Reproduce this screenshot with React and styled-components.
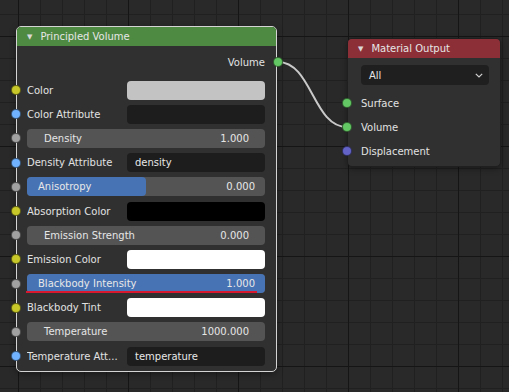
import React from 'react';
import styled, { createGlobalStyle } from 'styled-components';

const SOCKET = {
  float: '#a1a1a1',
  color: '#c7c729',
  string: '#70b2ff',
  shader: '#63c763',
  vector: '#6363c7',
};

const inputs = [
  { kind: 'color', label: 'Color', swatch: '#c3c3c3' },
  { kind: 'string', label: 'Color Attribute', text: '' },
  { kind: 'number', label: 'Density', value: '1.000' },
  { kind: 'string', label: 'Density Attribute', text: 'density' },
  { kind: 'factor', label: 'Anisotropy', value: '0.000', fill: 0.5 },
  { kind: 'color', label: 'Absorption Color', swatch: '#000000' },
  { kind: 'number', label: 'Emission Strength', value: '0.000' },
  { kind: 'color', label: 'Emission Color', swatch: '#ffffff' },
  { kind: 'factor', label: 'Blackbody Intensity', value: '1.000', fill: 1, marked: true },
  { kind: 'color', label: 'Blackbody Tint', swatch: '#ffffff' },
  { kind: 'number', label: 'Temperature', value: '1000.000' },
  { kind: 'string', label: 'Temperature Att...', text: 'temperature' },
];

const socketColor = (kind) =>
  kind === 'color' ? SOCKET.color : kind === 'string' ? SOCKET.string : SOCKET.float;

function InputRow({ item }) {
  return (
    <Row>
      <Socket $color={socketColor(item.kind)} $side="left" />
      {item.kind === 'color' && (
        <>
          <Label>{item.label}</Label>
          <Swatch $color={item.swatch} />
        </>
      )}
      {item.kind === 'string' && (
        <>
          <Label>{item.label}</Label>
          <TextField>{item.text}</TextField>
        </>
      )}
      {item.kind === 'number' && (
        <NumberField>
          <span>{item.label}</span>
          <span>{item.value}</span>
        </NumberField>
      )}
      {item.kind === 'factor' && (
        <FactorField>
          <FactorFill style={{ width: `${item.fill * 100}%` }} />
          <FactorText>
            <span>{item.label}</span>
            <span>{item.value}</span>
          </FactorText>
          {item.marked && <RedMark />}
        </FactorField>
      )}
    </Row>
  );
}

export default function App() {
  return (
    <>
      <GlobalStyle />
      <Canvas>
        <Link width="509" height="392" viewBox="0 0 509 392">
          <path d="M278 62 C 312 62, 313 127, 347 127" stroke="#c9c9c9" strokeWidth="2" fill="none" />
        </Link>

        <Node $left={16} $top={26} $width={261} $active>
          <Header $color="#4f8a43">
            <Arrow>▼</Arrow>
            Principled Volume
          </Header>
          <Body>
            <OutputRow>
              Volume
              <Socket $color={SOCKET.shader} $side="right" />
            </OutputRow>
            <Spacer />
            {inputs.map((item) => (
              <InputRow key={item.label} item={item} />
            ))}
          </Body>
        </Node>

        <Node $left={347} $top={38} $width={154}>
          <Header $color="#8d2f37">
            <Arrow>▼</Arrow>
            Material Output
          </Header>
          <OutBody>
            <Dropdown>
              All
              <Chevron viewBox="0 0 8 5" width="8" height="5">
                <path d="M0.8 0.8 L4 4 L7.2 0.8" stroke="#d0d0d0" strokeWidth="1.2" fill="none" />
              </Chevron>
            </Dropdown>
            <PlainRow>
              <Socket $color={SOCKET.shader} $side="left" $inset={13} />
              Surface
            </PlainRow>
            <PlainRow>
              <Socket $color={SOCKET.shader} $side="left" $inset={13} />
              Volume
            </PlainRow>
            <PlainRow>
              <Socket $color={SOCKET.vector} $side="left" $inset={13} />
              Displacement
            </PlainRow>
          </OutBody>
        </Node>
      </Canvas>
    </>
  );
}

const GlobalStyle = createGlobalStyle`
  html, body {
    margin: 0;
    padding: 0;
    background: #282828;
  }
  body {
    font-family: "DejaVu Sans", "Liberation Sans", sans-serif;
  }
`;

const Canvas = styled.div`
  position: relative;
  width: 509px;
  height: 392px;
  overflow: hidden;
  background-color: #292929;
  background-image:
    linear-gradient(to right, #151515 1px, transparent 1px),
    linear-gradient(to bottom, #151515 1px, transparent 1px),
    linear-gradient(to right, #202020 1px, transparent 1px),
    linear-gradient(to bottom, #202020 1px, transparent 1px);
  background-size: 110px 100%, 100% 110px, 22px 100%, 100% 22px;
  background-position: 18px 0, 0 36px, 18px 0, 0 14px;
`;

const Link = styled.svg`
  position: absolute;
  left: 0;
  top: 0;
`;

const Node = styled.div`
  position: absolute;
  left: ${(p) => p.$left}px;
  top: ${(p) => p.$top}px;
  width: ${(p) => p.$width}px;
  box-sizing: border-box;
  background: #303030;
  border: 1px solid ${(p) => (p.$active ? '#d4d4d4' : '#1f1f1f')};
  border-radius: 5px;
  box-shadow: 0 2px 6px rgba(0, 0, 0, 0.35);
  color: #e2e2e2;
  font-size: 10px;
`;

const Header = styled.div`
  display: flex;
  align-items: center;
  height: 19px;
  padding-left: 10px;
  background: ${(p) => p.$color};
  border-radius: 4px 4px 0 0;
  color: #e6e6e6;
  font-size: 10px;
`;

const Arrow = styled.span`
  font-size: 7px;
  color: #d9d9d9;
  margin-right: 8px;
`;

const Body = styled.div`
  display: flex;
  flex-direction: column;
  padding: 4px 11px 3px 10px;
`;

const OutputRow = styled.div`
  position: relative;
  display: flex;
  align-items: center;
  justify-content: flex-end;
  height: 24px;
`;

const Spacer = styled.div`
  height: 4px;
`;

const Row = styled.div`
  position: relative;
  display: flex;
  align-items: center;
  height: 24.2px;
`;

const Socket = styled.span`
  position: absolute;
  top: 50%;
  width: 10px;
  height: 10px;
  margin-top: -5px;
  border-radius: 50%;
  box-sizing: border-box;
  background: ${(p) => p.$color};
  border: 1px solid rgba(0, 0, 0, 0.5);
  ${(p) => (p.$side === 'left' ? `left: ${-(p.$inset ?? 10) - 6.5}px;` : 'right: -17.5px;')}
`;

const Label = styled.span`
  flex: 1;
  white-space: nowrap;
  overflow: hidden;
`;

const FieldBase = styled.div`
  box-sizing: border-box;
  height: 19px;
  border-radius: 4px;
`;

const Swatch = styled(FieldBase)`
  width: 138px;
  background: ${(p) => p.$color};
`;

const TextField = styled(FieldBase)`
  width: 138px;
  background: #1d1d1d;
  display: flex;
  align-items: center;
  padding-left: 8px;
  color: #e8e8e8;
`;

const NumberField = styled(FieldBase)`
  flex: 1;
  display: flex;
  align-items: center;
  justify-content: space-between;
  padding: 0 16px 0 17px;
  background: #545454;
  color: #e6e6e6;
`;

const FactorField = styled(FieldBase)`
  position: relative;
  flex: 1;
  background: #545454;
`;

const FactorFill = styled.div`
  position: absolute;
  left: 0;
  top: 0;
  bottom: 0;
  background: #4772b3;
  border-radius: 4px;
`;

const FactorText = styled.div`
  position: relative;
  display: flex;
  align-items: center;
  justify-content: space-between;
  height: 100%;
  padding: 0 10px 0 11px;
  color: #e8e8e8;
`;

const RedMark = styled.div`
  position: absolute;
  left: -1px;
  right: 8px;
  bottom: 0;
  height: 2px;
  background: #d8182e;
`;

const OutBody = styled.div`
  display: flex;
  flex-direction: column;
  padding: 7px 11px 3px 13px;
`;

const Dropdown = styled.div`
  display: flex;
  align-items: center;
  justify-content: space-between;
  height: 20px;
  padding: 0 6px 0 8px;
  margin-bottom: 6px;
  border-radius: 4px;
  background: #1f1f1f;
  color: #e6e6e6;
`;

const Chevron = styled.svg`
  display: block;
`;

const PlainRow = styled.div`
  position: relative;
  display: flex;
  align-items: center;
  height: 24px;
`;
